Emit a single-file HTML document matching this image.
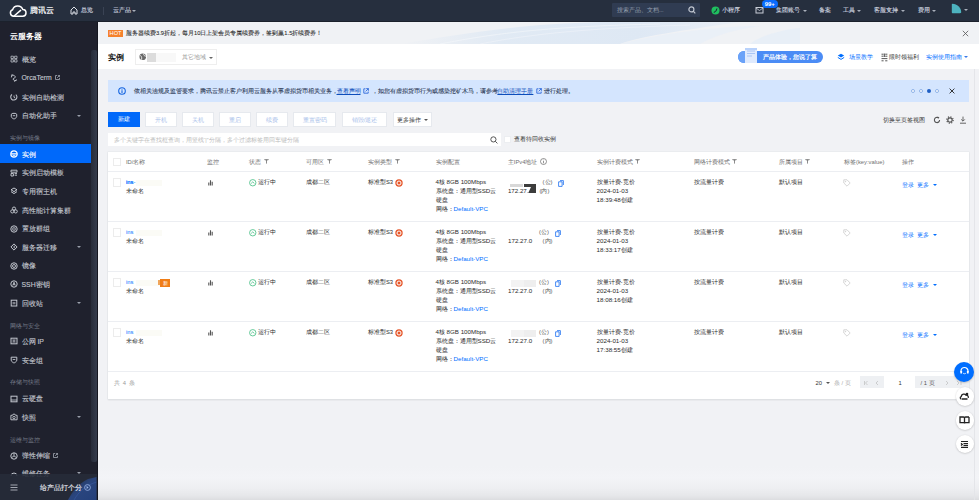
<!DOCTYPE html>
<html><head><meta charset="utf-8">
<style>
*{box-sizing:border-box;margin:0;padding:0}
html,body{width:979px;height:500px;overflow:hidden;background:#f1f2f5;font-family:"Liberation Sans",sans-serif;color:#333}
.a{position:absolute;white-space:nowrap}
.nav{color:#d3d8e0;font-size:6px;line-height:8px;-webkit-text-stroke:0.12px #d3d8e0}
.si{color:#cdd1d9;font-size:6.9px;line-height:10px;-webkit-text-stroke:0.12px currentColor}
.sh{color:#767c8a;font-size:5.5px;line-height:8px}
.hd{color:#888;font-size:5.8px;line-height:8px}
.cell{color:#333;font-size:5.8px;line-height:8.8px}
.lnk{color:#006eff}
.l{font-size:6.2px}
.btn{top:112.3px;height:14.5px;background:#fff;border:0.5px solid #e6e9ee;color:#a9c1ea;font-size:5.8px;line-height:14.5px;text-align:center}
.caret{width:0;height:0;border-left:2px solid transparent;border-right:2px solid transparent;border-top:2.4px solid #c9ced8}
</style></head><body>
<div class="a" style="left:98px;top:22px;width:881px;height:478px;background:#f1f2f5"></div>
<div class="a" style="left:98px;top:466px;width:881px;height:12px;background:linear-gradient(#f1f2f5,#f3f4f7)"></div><div class="a" style="left:98px;top:478px;width:881px;height:22px;background:linear-gradient(#f3f4f7 0%,#eeeff2 45%,#e6e7ea 80%,#dcdde0 100%)"></div>
<div class="a" style="left:974px;top:69px;width:1px;height:431px;background:#e4e5e9"></div>
<!-- notice bar -->
<div class="a" style="left:98px;top:22px;width:881px;height:22px;background:#f0f2f5"></div>
<svg class="a" style="left:400px;top:22px" width="400" height="22" viewBox="0 0 400 22"><defs><linearGradient id="wv" x1="0" x2="1" y1="0" y2="0"><stop offset="0" stop-color="#dfe8f3" stop-opacity="0"/><stop offset="0.3" stop-color="#dfe9f4" stop-opacity="0.9"/><stop offset="0.7" stop-color="#dce7f4" stop-opacity="0.9"/><stop offset="1" stop-color="#d6e4f6" stop-opacity="0.2"/></linearGradient></defs><path d="M0 22 C60 12 120 2 200 0 L340 0 C300 6 240 14 220 22 Z" fill="url(#wv)"/><path d="M220 22 C250 14 300 6 350 4 L360 4 C330 8 310 16 300 22 Z" fill="#e8eff8" opacity="0.8"/><path d="M350 22 C360 14 380 8 400 6 V22 Z" fill="#e3ecf8" opacity="0.6"/><path d="M40 22 C100 10 160 4 260 2" fill="none" stroke="#f4f7fb" stroke-width="0.8" opacity="0.8"/><path d="M80 22 C130 12 190 6 290 3" fill="none" stroke="#f4f7fb" stroke-width="0.6" opacity="0.8"/></svg>
<div class="a" style="left:108px;top:29.5px;width:15px;height:7.5px;background:#f5822c;color:#fff;font-size:5.6px;line-height:7.5px;text-align:center">HOT</div>
<div class="a" style="left:126px;top:29px;font-size:5.74px;line-height:8px;color:#2a2a2a;-webkit-text-stroke:0.08px #2a2a2a">服务器续费3.9折起，每月10日上架会员专属续费券，签到赢1.5折续费券！</div>
<svg class="a" style="left:962px;top:30px" width="7" height="7" viewBox="0 0 7 7"><path d="M0.8 0.8 L6.2 6.2 M6.2 0.8 L0.8 6.2" stroke="#555" stroke-width="0.8"/></svg>
<!-- header -->
<div class="a" style="left:98px;top:44px;width:881px;height:25px;background:#fff"></div>
<div class="a" style="left:108px;top:52.8px;font-size:7.6px;line-height:10px;color:#111;font-weight:bold">实例</div>
<div class="a" style="left:135px;top:49px;width:82px;height:16px;border:0.6px solid #eeeeee;background:#fff"></div>
<svg class="a" style="left:138.8px;top:53.3px" width="7.5" height="7.5" viewBox="0 0 7.5 7.5"><circle cx="3.75" cy="3.75" r="3.3" fill="#6a6a6a"/><path d="M1.2 2.5 C2.2 2.8 3 3.8 2.6 6.6 M4.6 0.8 C4.4 2.2 5.5 3.2 7 3.2" fill="none" stroke="#fff" stroke-width="0.8"/></svg>
<div class="a" style="left:147px;top:52.5px;width:9px;height:9.5px;background:#dcdcdc"></div>
<div class="a" style="left:156px;top:52.5px;width:20px;height:9.5px;background:#f8f8f8"></div>
<div class="a" style="left:181.5px;top:53px;font-size:5.8px;line-height:8px;color:#999">其它地域</div>
<div class="a caret" style="left:208.5px;top:56.5px;border-top-color:#666"></div>
<!-- header right -->
<div class="a" style="left:738px;top:50.5px;width:85px;height:12px;background:#4b8cf5;border-radius:6px"></div>
<div class="a" style="left:738px;top:50.5px;width:12px;height:12px;background:#6aa2f8;border-radius:6px 0 0 6px"></div>
<svg class="a" style="left:744px;top:47px" width="15" height="16" viewBox="0 0 15 16"><rect x="1" y="1" width="12" height="15" fill="#dfeafd"/><path d="M3 4 H11 M3 6.5 H11 M3 9 H8" stroke="#9cbcf2" stroke-width="0.8"/><rect x="1" y="1" width="12" height="2" fill="#b9d2fb"/></svg>
<div class="a" style="left:763px;top:52.5px;font-size:5.8px;line-height:8px;color:#fff;-webkit-text-stroke:0.2px #fff">产品体验，您说了算</div>
<svg class="a" style="left:837px;top:53px" width="8" height="8" viewBox="0 0 8 8"><path d="M4 0.8 L7.2 2.6 L4 4.4 L0.8 2.6 Z" fill="#006eff"/><path d="M0.8 4.4 L4 6.4 L7.2 4.4" fill="none" stroke="#006eff" stroke-width="1"/></svg>
<div class="a" style="left:849px;top:52.5px;font-size:5.8px;line-height:8px;color:#006eff">场景教学</div>
<svg class="a" style="left:880.5px;top:52.5px" width="7" height="9" viewBox="0 0 7 9"><path d="M0.5 1.2 H2.6 M0.5 3.2 H2.6 M4.2 1.2 H6.4 M4.2 3.2 H6.4 M0.5 5.6 H6.4 M0.5 7.8 H2.6 M4.2 7.8 H6.4 M3.4 0.5 V4" fill="none" stroke="#444" stroke-width="0.9"/></svg>
<div class="a" style="left:889px;top:52.5px;font-size:5.8px;line-height:8px;color:#333">限时领福利</div>
<div class="a" style="left:926px;top:52.5px;font-size:5.8px;line-height:8px;color:#006eff">实例使用指南</div>
<div class="a caret" style="left:964px;top:56px;border-top-color:#3b7ae8"></div>
<!-- info banner -->
<div class="a" style="left:108px;top:79.5px;width:861px;height:22.5px;background:#d4e5fe"></div>
<svg class="a" style="left:118px;top:86.5px" width="8" height="8" viewBox="0 0 8 8"><circle cx="4" cy="4" r="3.3" fill="none" stroke="#1565e0" stroke-width="1.1"/><path d="M4 3.3 V6" stroke="#1565e0" stroke-width="1.1"/><circle cx="4" cy="2.2" r="0.5" fill="#006eff"/></svg>
<div class="a" style="left:134.3px;top:86.5px;font-size:5.85px;line-height:8px;color:#2f3c58;-webkit-text-stroke:0.1px #2f3c58">依相关法规及监管要求，腾讯云禁止客户利用云服务从事虚拟货币相关业务，</div><div class="a" style="left:336.5px;top:86.5px;font-size:5.85px;line-height:8px;color:#0d4dbb;text-decoration:underline">查看声明</div><svg class="a" style="left:362.5px;top:87.5px" width="6" height="6" viewBox="0 0 6 6"><path d="M2.5 0.8 H0.8 V5.2 H5.2 V3.5 M3.2 0.6 H5.4 V2.8 M5.4 0.6 L2.6 3.4" fill="none" stroke="#1c5ad6" stroke-width="0.8"/></svg><div class="a" style="left:371.5px;top:86.5px;font-size:5.8px;line-height:8px;color:#2f3c58;-webkit-text-stroke:0.1px #2f3c58">，如您有虚拟货币行为或感染挖矿木马，请参考</div><div class="a" style="left:497.4px;top:86.5px;font-size:5.85px;line-height:8px;color:#0d4dbb;text-decoration:underline">自助清理手册</div><svg class="a" style="left:535.8px;top:87.5px" width="6" height="6" viewBox="0 0 6 6"><path d="M2.5 0.8 H0.8 V5.2 H5.2 V3.5 M3.2 0.6 H5.4 V2.8 M5.4 0.6 L2.6 3.4" fill="none" stroke="#1c5ad6" stroke-width="0.8"/></svg><div class="a" style="left:544.4px;top:86.5px;font-size:5.85px;line-height:8px;color:#2f3c58;-webkit-text-stroke:0.1px #2f3c58">进行处理。</div>
<div class="a" style="left:910.5px;top:88.5px;width:4px;height:4px;border-radius:2px;border:0.6px solid #8eb2e8;background:#fff"></div>
<div class="a" style="left:918.5px;top:88.5px;width:4px;height:4px;border-radius:2px;border:0.6px solid #8eb2e8;background:#fff"></div>
<div class="a" style="left:926.5px;top:88.5px;width:4px;height:4px;border-radius:2px;background:#1f5fc4"></div>
<div class="a" style="left:934.5px;top:88.5px;width:4px;height:4px;border-radius:2px;border:0.6px solid #8eb2e8;background:#fff"></div>
<svg class="a" style="left:949px;top:87.5px" width="6" height="6" viewBox="0 0 6 6"><path d="M0.6 0.6 L5.4 5.4 M5.4 0.6 L0.6 5.4" stroke="#222" stroke-width="0.9"/></svg>
<!-- buttons -->
<div class="a" style="left:108px;top:112.3px;width:32px;height:14.5px;background:#0069fa;color:#fff;font-size:5.8px;line-height:14.5px;text-align:center">新建</div>
<div class="a btn" style="left:145.3px;width:31.4px">开机</div>
<div class="a btn" style="left:182.3px;width:31.4px">关机</div>
<div class="a btn" style="left:219.4px;width:31.9px">重启</div>
<div class="a btn" style="left:256.4px;width:31.9px">续费</div>
<div class="a btn" style="left:293.4px;width:42.9px">重置密码</div>
<div class="a btn" style="left:342.3px;width:44.4px">销毁/退还</div>
<div class="a btn" style="left:393px;width:39px;color:#333">更多操作<span class="caret" style="display:inline-block;margin-left:3px;vertical-align:1px;border-top-color:#555"></span></div>
<div class="a" style="left:882.7px;top:116px;font-size:5.8px;line-height:8px;color:#333">切换至页签视图</div>
<svg class="a" style="left:933px;top:116px" width="8" height="8" viewBox="0 0 8 8"><path d="M6.6 4 A2.6 2.6 0 1 1 5.2 1.7" fill="none" stroke="#555" stroke-width="1.1"/><path d="M4.3 0.6 L6.3 1.2 L5.5 3.1 Z" fill="#555"/></svg>
<svg class="a" style="left:946px;top:116px" width="8" height="8" viewBox="0 0 8 8"><circle cx="4" cy="4" r="2.2" fill="none" stroke="#555" stroke-width="1.2"/><circle cx="4" cy="4" r="3.2" fill="none" stroke="#555" stroke-width="1.2" stroke-dasharray="1.2 1.31"/></svg>
<svg class="a" style="left:958.5px;top:116px" width="8" height="8" viewBox="0 0 8 8"><path d="M4 0.6 V5 M2.2 3.4 L4 5.2 L5.8 3.4 M1 7.2 H7" fill="none" stroke="#555" stroke-width="0.9"/></svg>
<!-- search -->
<div class="a" style="left:108px;top:132.6px;width:393px;height:13.4px;background:#fff"></div>
<div class="a" style="left:113.5px;top:135.5px;font-size:5.6px;line-height:8px;color:#bbb">多个关键字在查找框查询，用竖线“|”分隔，多个过滤标签用回车键分隔</div>
<svg class="a" style="left:489.5px;top:135.5px" width="8" height="8" viewBox="0 0 8 8"><circle cx="3.4" cy="3.4" r="2.6" fill="none" stroke="#444" stroke-width="0.9"/><path d="M5.3 5.3 L7.4 7.4" stroke="#444" stroke-width="0.9"/></svg>
<div class="a" style="left:503.7px;top:135.5px;width:7.7px;height:7.7px;background:#fff;border:0.5px solid #eceef1"></div>
<div class="a" style="left:514px;top:135.3px;font-size:5.8px;line-height:8px;color:#333">查看待回收实例</div>

<div class="a" style="left:108px;top:151.5px;width:861px;height:247.5px;background:#fff;box-shadow:0 0 0 0.5px #e3e5ea,0 1px 1.5px rgba(0,0,0,0.12)"></div>
<div class="a" style="left:112.8px;top:157.5px;width:8.5px;height:8.3px;border:0.6px solid #ececec;background:#fff"></div>
<div class="a" style="left:126px;top:157.5px;font-size:5.8px;line-height:8px;color:#707070">ID/名称</div>
<div class="a" style="left:206.7px;top:157.5px;font-size:5.8px;line-height:8px;color:#707070">监控</div>
<div class="a" style="left:248.6px;top:157.5px;font-size:5.8px;line-height:8px;color:#707070">状态</div>
<svg class="a" style="left:264.3px;top:159px" width="5" height="5" viewBox="0 0 5 5"><path d="M0.3 0.6 H4.7 M2.5 0.6 V4.6" stroke="#808080" stroke-width="0.9"/><path d="M1.2 1 L2.5 2.3 L3.8 1 Z" fill="#808080"/></svg>
<div class="a" style="left:305.6px;top:157.5px;font-size:5.8px;line-height:8px;color:#707070">可用区</div>
<svg class="a" style="left:326.8px;top:159px" width="5" height="5" viewBox="0 0 5 5"><path d="M0.3 0.6 H4.7 M2.5 0.6 V4.6" stroke="#808080" stroke-width="0.9"/><path d="M1.2 1 L2.5 2.3 L3.8 1 Z" fill="#808080"/></svg>
<div class="a" style="left:367.9px;top:157.5px;font-size:5.8px;line-height:8px;color:#707070">实例类型</div>
<svg class="a" style="left:394.5px;top:159px" width="5" height="5" viewBox="0 0 5 5"><path d="M0.3 0.6 H4.7 M2.5 0.6 V4.6" stroke="#808080" stroke-width="0.9"/><path d="M1.2 1 L2.5 2.3 L3.8 1 Z" fill="#808080"/></svg>
<div class="a" style="left:435.5px;top:157.5px;font-size:5.8px;line-height:8px;color:#707070">实例配置</div>
<div class="a" style="left:507.8px;top:157.5px;font-size:5.8px;line-height:8px;color:#707070">主IPv4地址</div>
<div class="a" style="left:596.6px;top:157.5px;font-size:5.8px;line-height:8px;color:#707070">实例计费模式</div>
<svg class="a" style="left:634.5px;top:159px" width="5" height="5" viewBox="0 0 5 5"><path d="M0.3 0.6 H4.7 M2.5 0.6 V4.6" stroke="#808080" stroke-width="0.9"/><path d="M1.2 1 L2.5 2.3 L3.8 1 Z" fill="#808080"/></svg>
<div class="a" style="left:693.6px;top:157.5px;font-size:5.8px;line-height:8px;color:#707070">网络计费模式</div>
<svg class="a" style="left:731.5px;top:159px" width="5" height="5" viewBox="0 0 5 5"><path d="M0.3 0.6 H4.7 M2.5 0.6 V4.6" stroke="#808080" stroke-width="0.9"/><path d="M1.2 1 L2.5 2.3 L3.8 1 Z" fill="#808080"/></svg>
<div class="a" style="left:779.2px;top:157.5px;font-size:5.8px;line-height:8px;color:#707070">所属项目</div>
<svg class="a" style="left:805.3px;top:159px" width="5" height="5" viewBox="0 0 5 5"><path d="M0.3 0.6 H4.7 M2.5 0.6 V4.6" stroke="#808080" stroke-width="0.9"/><path d="M1.2 1 L2.5 2.3 L3.8 1 Z" fill="#808080"/></svg>
<div class="a" style="left:844px;top:157.5px;font-size:5.8px;line-height:8px;color:#707070">标签(key:value)</div>
<div class="a" style="left:902px;top:157.5px;font-size:5.8px;line-height:8px;color:#707070">操作</div>
<svg class="a" style="left:540px;top:158px" width="7" height="7" viewBox="0 0 7 7"><circle cx="3.5" cy="3.5" r="3" fill="none" stroke="#666" stroke-width="0.7"/><path d="M3.5 3 V5.3" stroke="#666" stroke-width="0.7"/><circle cx="3.5" cy="1.9" r="0.45" fill="#666"/></svg>
<div class="a" style="left:108px;top:170.5px;width:861px;height:1px;background:#eceef2"></div>
<div class="a" style="left:112.5px;top:178.3px;width:8.5px;height:8.3px;border:0.6px solid #ececec;background:#fff"></div>
<div class="a" style="left:126px;top:178.3px;font-size:5.8px;line-height:8.8px;color:#2a2a2a"><span style="color:#006eff">ins</span></div>
<div class="a" style="left:126px;top:178.3px;font-size:5.8px;line-height:8.8px;color:#2a2a2a"><span style="color:#006eff">ins-</span></div>
<div class="a" style="left:136px;top:180px;width:26px;height:6px;background:#fbfbf6"></div>
<div class="a" style="left:126px;top:187.10000000000002px;font-size:5.8px;line-height:8.8px;color:#2a2a2a">未命名</div>
<svg class="a" style="left:207px;top:179px" width="7" height="7" viewBox="0 0 7 7"><path d="M1.8 6.5 V3.6 M3.5 6.5 V1.2 M5.2 6.5 V2.8" stroke="#555" stroke-width="1.1"/></svg>
<svg class="a" style="left:249px;top:179.3px" width="7.5" height="7.5" viewBox="0 0 7.5 7.5"><circle cx="3.75" cy="3.75" r="3.2" fill="none" stroke="#35b87a" stroke-width="0.75"/><path d="M2.1 4.5 L3.75 2.9 L5.4 4.5" fill="none" stroke="#35b87a" stroke-width="0.75"/></svg>
<div class="a" style="left:258.3px;top:178.3px;font-size:5.8px;line-height:8.8px;color:#2a2a2a">运行中</div>
<div class="a" style="left:305.6px;top:178.3px;font-size:5.8px;line-height:8.8px;color:#2a2a2a">成都二区</div>
<div class="a" style="left:367.9px;top:178.3px;font-size:5.8px;line-height:8.8px;color:#2a2a2a">标准型S3</div>
<svg class="a" style="left:394.5px;top:179px" width="8" height="8" viewBox="0 0 8 8"><circle cx="4" cy="4" r="3.7" fill="#e5562a"/><circle cx="4" cy="4" r="2" fill="none" stroke="#fff" stroke-width="1"/></svg>
<div class="a" style="left:435.5px;top:178.3px;font-size:5.8px;line-height:8.8px;color:#2a2a2a"><span class=l>4</span>核 <span class=l>8GB 100Mbps</span><br>系统盘：通用型<span class=l>SSD</span>云<br>硬盘<br>网络：<span class=l style="color:#006eff">Default-VPC</span></div>
<div class="a" style="left:510.4px;top:183.8px;width:13px;height:2.8px;background:#d8d8d8"></div>
<div class="a" style="left:507.9px;top:187.10000000000002px;font-size:5.8px;line-height:8.8px;color:#2a2a2a"><span class=l>172.27.</span></div>
<svg class="a" style="left:523.6px;top:183.8px" width="12" height="9.6" viewBox="0 0 12 9.6"><path d="M0 0 H12 V9.5 H4 L7 3 H0 Z" fill="#3c3c3c"/></svg>
<div class="a" style="left:542.6px;top:178.3px;font-size:5.8px;line-height:8.8px;color:#2a2a2a;color:#555">(公)</div>
<div class="a" style="left:539.5px;top:187.10000000000002px;font-size:5.8px;line-height:8.8px;color:#2a2a2a;color:#555">(内)</div>
<svg class="a" style="left:558px;top:179.8px" width="6" height="7" viewBox="0 0 6 7"><path d="M2 0.6 H5.4 V5 M0.6 1.8 H4.1 V6.4 H0.6 Z" fill="none" stroke="#1a6ff0" stroke-width="0.8"/></svg>
<div class="a" style="left:596.6px;top:178.3px;font-size:5.8px;line-height:8.8px;color:#2a2a2a">按量计费-竞价<br><span class=l>2024-01-03</span><br><span class=l>18:39:48</span>创建</div>
<div class="a" style="left:693.6px;top:178.3px;font-size:5.8px;line-height:8.8px;color:#2a2a2a">按流量计费</div>
<div class="a" style="left:779.2px;top:178.3px;font-size:5.8px;line-height:8.8px;color:#2a2a2a">默认项目</div>
<svg class="a" style="left:843px;top:179px" width="8" height="8" viewBox="0 0 8 8"><path d="M0.8 0.8 H4 L7.2 4 L4 7.2 L0.8 4 Z" fill="none" stroke="#ccc" stroke-width="0.8"/><circle cx="2.6" cy="2.6" r="0.6" fill="#ccc"/></svg>
<div class="a" style="left:902px;top:181px;font-size:5.8px;line-height:8.8px;color:#2a2a2a;color:#006eff">登录&nbsp; 更多</div>
<div class="a caret" style="left:932.5px;top:184.3px;border-top-color:#006eff"></div>
<div class="a" style="left:108px;top:220.5px;width:861px;height:1px;background:#eceef2"></div>
<div class="a" style="left:112.5px;top:228.3px;width:8.5px;height:8.3px;border:0.6px solid #ececec;background:#fff"></div>
<div class="a" style="left:126px;top:228.3px;font-size:5.8px;line-height:8.8px;color:#2a2a2a"><span style="color:#006eff">ins</span></div>
<div class="a" style="left:136px;top:230px;width:26px;height:6px;background:#fbfbf6"></div>
<div class="a" style="left:126px;top:237.10000000000002px;font-size:5.8px;line-height:8.8px;color:#2a2a2a">未命名</div>
<svg class="a" style="left:207px;top:229px" width="7" height="7" viewBox="0 0 7 7"><path d="M1.8 6.5 V3.6 M3.5 6.5 V1.2 M5.2 6.5 V2.8" stroke="#555" stroke-width="1.1"/></svg>
<svg class="a" style="left:249px;top:229.3px" width="7.5" height="7.5" viewBox="0 0 7.5 7.5"><circle cx="3.75" cy="3.75" r="3.2" fill="none" stroke="#35b87a" stroke-width="0.75"/><path d="M2.1 4.5 L3.75 2.9 L5.4 4.5" fill="none" stroke="#35b87a" stroke-width="0.75"/></svg>
<div class="a" style="left:258.3px;top:228.3px;font-size:5.8px;line-height:8.8px;color:#2a2a2a">运行中</div>
<div class="a" style="left:305.6px;top:228.3px;font-size:5.8px;line-height:8.8px;color:#2a2a2a">成都二区</div>
<div class="a" style="left:367.9px;top:228.3px;font-size:5.8px;line-height:8.8px;color:#2a2a2a">标准型S3</div>
<svg class="a" style="left:394.5px;top:229px" width="8" height="8" viewBox="0 0 8 8"><circle cx="4" cy="4" r="3.7" fill="#e5562a"/><circle cx="4" cy="4" r="2" fill="none" stroke="#fff" stroke-width="1"/></svg>
<div class="a" style="left:435.5px;top:228.3px;font-size:5.8px;line-height:8.8px;color:#2a2a2a"><span class=l>4</span>核 <span class=l>8GB 100Mbps</span><br>系统盘：通用型<span class=l>SSD</span>云<br>硬盘<br>网络：<span class=l style="color:#006eff">Default-VPC</span></div>
<div class="a" style="left:508px;top:237.10000000000002px;font-size:5.8px;line-height:8.8px;color:#2a2a2a"><span class=l>172.27.0</span></div>
<div class="a" style="left:539px;top:228.3px;font-size:5.8px;line-height:8.8px;color:#2a2a2a;color:#555">(公)</div>
<div class="a" style="left:542.6px;top:237.10000000000002px;font-size:5.8px;line-height:8.8px;color:#2a2a2a;color:#555">(内)</div>
<svg class="a" style="left:555px;top:229.8px" width="6" height="7" viewBox="0 0 6 7"><path d="M2 0.6 H5.4 V5 M0.6 1.8 H4.1 V6.4 H0.6 Z" fill="none" stroke="#1a6ff0" stroke-width="0.8"/></svg>
<div class="a" style="left:596.6px;top:228.3px;font-size:5.8px;line-height:8.8px;color:#2a2a2a">按量计费-竞价<br><span class=l>2024-01-03</span><br><span class=l>18:33:17</span>创建</div>
<div class="a" style="left:693.6px;top:228.3px;font-size:5.8px;line-height:8.8px;color:#2a2a2a">按流量计费</div>
<div class="a" style="left:779.2px;top:228.3px;font-size:5.8px;line-height:8.8px;color:#2a2a2a">默认项目</div>
<svg class="a" style="left:843px;top:229px" width="8" height="8" viewBox="0 0 8 8"><path d="M0.8 0.8 H4 L7.2 4 L4 7.2 L0.8 4 Z" fill="none" stroke="#ccc" stroke-width="0.8"/><circle cx="2.6" cy="2.6" r="0.6" fill="#ccc"/></svg>
<div class="a" style="left:902px;top:231px;font-size:5.8px;line-height:8.8px;color:#2a2a2a;color:#006eff">登录&nbsp; 更多</div>
<div class="a caret" style="left:932.5px;top:234.3px;border-top-color:#006eff"></div>
<div class="a" style="left:108px;top:270.5px;width:861px;height:1px;background:#eceef2"></div>
<div class="a" style="left:112.5px;top:278.3px;width:8.5px;height:8.3px;border:0.6px solid #ececec;background:#fff"></div>
<div class="a" style="left:126px;top:278.3px;font-size:5.8px;line-height:8.8px;color:#2a2a2a"><span style="color:#006eff">ins</span></div>
<div class="a" style="left:136px;top:280px;width:26px;height:6px;background:#fbfbf6"></div>
<div class="a" style="left:158px;top:280px;width:3px;height:5px;background:#f0a55a"></div>
<div class="a" style="left:160px;top:278.6px;width:10px;height:8.4px;background:#f07d16;color:#fff;font-size:5.2px;line-height:8.4px;text-align:center">新</div>
<div class="a" style="left:126px;top:287.1px;font-size:5.8px;line-height:8.8px;color:#2a2a2a">未命名</div>
<svg class="a" style="left:207px;top:279px" width="7" height="7" viewBox="0 0 7 7"><path d="M1.8 6.5 V3.6 M3.5 6.5 V1.2 M5.2 6.5 V2.8" stroke="#555" stroke-width="1.1"/></svg>
<svg class="a" style="left:249px;top:279.3px" width="7.5" height="7.5" viewBox="0 0 7.5 7.5"><circle cx="3.75" cy="3.75" r="3.2" fill="none" stroke="#35b87a" stroke-width="0.75"/><path d="M2.1 4.5 L3.75 2.9 L5.4 4.5" fill="none" stroke="#35b87a" stroke-width="0.75"/></svg>
<div class="a" style="left:258.3px;top:278.3px;font-size:5.8px;line-height:8.8px;color:#2a2a2a">运行中</div>
<div class="a" style="left:305.6px;top:278.3px;font-size:5.8px;line-height:8.8px;color:#2a2a2a">成都二区</div>
<div class="a" style="left:367.9px;top:278.3px;font-size:5.8px;line-height:8.8px;color:#2a2a2a">标准型S3</div>
<svg class="a" style="left:394.5px;top:279px" width="8" height="8" viewBox="0 0 8 8"><circle cx="4" cy="4" r="3.7" fill="#e5562a"/><circle cx="4" cy="4" r="2" fill="none" stroke="#fff" stroke-width="1"/></svg>
<div class="a" style="left:435.5px;top:278.3px;font-size:5.8px;line-height:8.8px;color:#2a2a2a"><span class=l>4</span>核 <span class=l>8GB 100Mbps</span><br>系统盘：通用型<span class=l>SSD</span>云<br>硬盘<br>网络：<span class=l style="color:#006eff">Default-VPC</span></div>
<div class="a" style="left:511px;top:280px;width:25px;height:6.5px;background:#f3f3f3"></div>
<div class="a" style="left:524px;top:280px;width:12px;height:6.5px;background:#eeeeee"></div>
<div class="a" style="left:508px;top:287.1px;font-size:5.8px;line-height:8.8px;color:#2a2a2a"><span class=l>172.27.0</span></div>
<div class="a" style="left:539px;top:278.3px;font-size:5.8px;line-height:8.8px;color:#2a2a2a;color:#555">(公)</div>
<div class="a" style="left:542.6px;top:287.1px;font-size:5.8px;line-height:8.8px;color:#2a2a2a;color:#555">(内)</div>
<svg class="a" style="left:555px;top:279.8px" width="6" height="7" viewBox="0 0 6 7"><path d="M2 0.6 H5.4 V5 M0.6 1.8 H4.1 V6.4 H0.6 Z" fill="none" stroke="#1a6ff0" stroke-width="0.8"/></svg>
<div class="a" style="left:596.6px;top:278.3px;font-size:5.8px;line-height:8.8px;color:#2a2a2a">按量计费-竞价<br><span class=l>2024-01-03</span><br><span class=l>18:08:16</span>创建</div>
<div class="a" style="left:693.6px;top:278.3px;font-size:5.8px;line-height:8.8px;color:#2a2a2a">按流量计费</div>
<div class="a" style="left:779.2px;top:278.3px;font-size:5.8px;line-height:8.8px;color:#2a2a2a">默认项目</div>
<svg class="a" style="left:843px;top:279px" width="8" height="8" viewBox="0 0 8 8"><path d="M0.8 0.8 H4 L7.2 4 L4 7.2 L0.8 4 Z" fill="none" stroke="#ccc" stroke-width="0.8"/><circle cx="2.6" cy="2.6" r="0.6" fill="#ccc"/></svg>
<div class="a" style="left:902px;top:281px;font-size:5.8px;line-height:8.8px;color:#2a2a2a;color:#006eff">登录&nbsp; 更多</div>
<div class="a caret" style="left:932.5px;top:284.3px;border-top-color:#006eff"></div>
<div class="a" style="left:108px;top:320.5px;width:861px;height:1px;background:#eceef2"></div>
<div class="a" style="left:112.5px;top:328.3px;width:8.5px;height:8.3px;border:0.6px solid #ececec;background:#fff"></div>
<div class="a" style="left:126px;top:328.3px;font-size:5.8px;line-height:8.8px;color:#2a2a2a"><span style="color:#006eff">ins</span></div>
<div class="a" style="left:136px;top:330px;width:26px;height:6px;background:#fbfbf6"></div>
<div class="a" style="left:126px;top:337.1px;font-size:5.8px;line-height:8.8px;color:#2a2a2a">未命名</div>
<svg class="a" style="left:207px;top:329px" width="7" height="7" viewBox="0 0 7 7"><path d="M1.8 6.5 V3.6 M3.5 6.5 V1.2 M5.2 6.5 V2.8" stroke="#555" stroke-width="1.1"/></svg>
<svg class="a" style="left:249px;top:329.3px" width="7.5" height="7.5" viewBox="0 0 7.5 7.5"><circle cx="3.75" cy="3.75" r="3.2" fill="none" stroke="#35b87a" stroke-width="0.75"/><path d="M2.1 4.5 L3.75 2.9 L5.4 4.5" fill="none" stroke="#35b87a" stroke-width="0.75"/></svg>
<div class="a" style="left:258.3px;top:328.3px;font-size:5.8px;line-height:8.8px;color:#2a2a2a">运行中</div>
<div class="a" style="left:305.6px;top:328.3px;font-size:5.8px;line-height:8.8px;color:#2a2a2a">成都二区</div>
<div class="a" style="left:367.9px;top:328.3px;font-size:5.8px;line-height:8.8px;color:#2a2a2a">标准型S3</div>
<svg class="a" style="left:394.5px;top:329px" width="8" height="8" viewBox="0 0 8 8"><circle cx="4" cy="4" r="3.7" fill="#e5562a"/><circle cx="4" cy="4" r="2" fill="none" stroke="#fff" stroke-width="1"/></svg>
<div class="a" style="left:435.5px;top:328.3px;font-size:5.8px;line-height:8.8px;color:#2a2a2a"><span class=l>4</span>核 <span class=l>8GB 100Mbps</span><br>系统盘：通用型<span class=l>SSD</span>云<br>硬盘<br>网络：<span class=l style="color:#006eff">Default-VPC</span></div>
<div class="a" style="left:511px;top:330px;width:25px;height:6.5px;background:#f3f3f3"></div>
<div class="a" style="left:524px;top:330px;width:12px;height:6.5px;background:#eeeeee"></div>
<div class="a" style="left:508px;top:337.1px;font-size:5.8px;line-height:8.8px;color:#2a2a2a"><span class=l>172.27.0</span></div>
<div class="a" style="left:539px;top:328.3px;font-size:5.8px;line-height:8.8px;color:#2a2a2a;color:#555">(公)</div>
<div class="a" style="left:542.6px;top:337.1px;font-size:5.8px;line-height:8.8px;color:#2a2a2a;color:#555">(内)</div>
<svg class="a" style="left:555px;top:329.8px" width="6" height="7" viewBox="0 0 6 7"><path d="M2 0.6 H5.4 V5 M0.6 1.8 H4.1 V6.4 H0.6 Z" fill="none" stroke="#1a6ff0" stroke-width="0.8"/></svg>
<div class="a" style="left:596.6px;top:328.3px;font-size:5.8px;line-height:8.8px;color:#2a2a2a">按量计费-竞价<br><span class=l>2024-01-03</span><br><span class=l>17:38:55</span>创建</div>
<div class="a" style="left:693.6px;top:328.3px;font-size:5.8px;line-height:8.8px;color:#2a2a2a">按流量计费</div>
<div class="a" style="left:779.2px;top:328.3px;font-size:5.8px;line-height:8.8px;color:#2a2a2a">默认项目</div>
<svg class="a" style="left:843px;top:329px" width="8" height="8" viewBox="0 0 8 8"><path d="M0.8 0.8 H4 L7.2 4 L4 7.2 L0.8 4 Z" fill="none" stroke="#ccc" stroke-width="0.8"/><circle cx="2.6" cy="2.6" r="0.6" fill="#ccc"/></svg>
<div class="a" style="left:902px;top:331px;font-size:5.8px;line-height:8.8px;color:#2a2a2a;color:#006eff">登录&nbsp; 更多</div>
<div class="a caret" style="left:932.5px;top:334.3px;border-top-color:#006eff"></div>
<div class="a" style="left:108px;top:370.5px;width:861px;height:1px;background:#eceef2"></div>
<div class="a" style="left:113.5px;top:378.5px;font-size:5.8px;line-height:8px;color:#999">共&nbsp; 4&nbsp; 条</div>
<div class="a" style="left:815.5px;top:378.5px;font-size:5.8px;line-height:8px;color:#333">20</div>
<div class="a caret" style="left:825.5px;top:381.7px;border-top-color:#555"></div>
<div class="a" style="left:834px;top:378.5px;font-size:5.8px;line-height:8px;color:#aaa">条 / 页</div>
<div class="a" style="left:860.3px;top:376.3px;width:108.7px;height:12.2px;background:#eef0f3"></div>
<div class="a" style="left:883.7px;top:376.3px;width:31.3px;height:12.2px;background:#fff"></div>
<div class="a" style="left:898.5px;top:378.5px;font-size:5.8px;line-height:8px;color:#333">1</div>
<div class="a" style="left:920.5px;top:378.5px;font-size:5.8px;line-height:8px;color:#555">/ 1 页</div>
<svg class="a" style="left:863px;top:379.5px" width="20" height="6" viewBox="0 0 20 6"><path d="M1.5 1 V5 M4.5 1 L2.5 3 L4.5 5 M15 1 L13 3 L15 5" fill="none" stroke="#bbb" stroke-width="0.7"/></svg>
<svg class="a" style="left:943px;top:379.5px" width="20" height="6" viewBox="0 0 20 6"><path d="M3 1 L5 3 L3 5 M14 1 L16 3 L14 5 M18 1 V5" fill="none" stroke="#bbb" stroke-width="0.7"/></svg>
<div class="a" style="left:954.3px;top:362px;width:19.5px;height:19.5px;border-radius:10px;background:#006eff;box-shadow:0 1px 2px rgba(0,0,0,0.2)"></div>
<svg class="a" style="left:958.5px;top:366px" width="11" height="11" viewBox="0 0 11 11"><path d="M2 6 V5 A3.5 3.5 0 0 1 9 5 V6" fill="none" stroke="#fff" stroke-width="1.2"/><rect x="1.3" y="5" width="1.8" height="2.6" rx="0.5" fill="#fff"/><rect x="7.9" y="5" width="1.8" height="2.6" rx="0.5" fill="#fff"/><path d="M4 7 C4.8 8 6.2 8 7 7" fill="none" stroke="#fff" stroke-width="0.8"/></svg>
<div class="a" style="left:955.5px;top:387.40000000000003px;width:18.4px;height:18.4px;border-radius:9.2px;background:#fff;box-shadow:0 0.5px 2px rgba(0,0,0,0.22)"></div>
<svg class="a" style="left:959px;top:391.1px" width="11" height="11" viewBox="0 0 11 11"><path d="M2.5 8 C1 8 0.8 6 2.2 5.6 C2.4 3 5.8 2.2 7 4.2 C8.6 4 9.6 5.3 9.3 6.8 M3 8 H8.5" fill="none" stroke="#222" stroke-width="1.3"/><circle cx="8" cy="3" r="1.3" fill="#222"/></svg>
<div class="a" style="left:955.5px;top:411.40000000000003px;width:18.4px;height:18.4px;border-radius:9.2px;background:#fff;box-shadow:0 0.5px 2px rgba(0,0,0,0.22)"></div>
<svg class="a" style="left:959px;top:415.1px" width="11" height="11" viewBox="0 0 11 11"><path d="M1 2 H4.5 C5 2 5.5 2.3 5.5 3 V8.5 C5.5 8 5 7.6 4.5 7.6 H1 Z M10 2 H6.5 C6 2 5.5 2.3 5.5 3 M10 2 V7.6 H6.5 C6 7.6 5.5 8 5.5 8.5" fill="none" stroke="#222" stroke-width="1.3"/></svg>
<div class="a" style="left:955.5px;top:435.1px;width:18.4px;height:18.4px;border-radius:9.2px;background:#fff;box-shadow:0 0.5px 2px rgba(0,0,0,0.22)"></div>
<svg class="a" style="left:959px;top:438.8px" width="11" height="11" viewBox="0 0 11 11"><path d="M2 2.5 H9 M4.5 4.5 H9 M4.5 6.3 H9 M2 8.3 H9 M2 4.3 L3.3 5.4 L2 6.5" fill="none" stroke="#222" stroke-width="1.2"/></svg>
<div class="a" style="left:0;top:22px;width:98px;height:478px;background:#1f212d"></div>
<div class="a" style="left:96.5px;top:22px;width:1.5px;height:478px;background:#14161f"></div>
<div class="a" style="left:10px;top:31.8px;font-size:7.8px;line-height:10px;color:#fff;font-weight:bold">云服务器</div>
<svg class="a" style="left:9.5px;top:55.4px" width="8" height="8" viewBox="0 0 8 8"><path d="M1 1.2h2.4v2.3H1zM4.6 1.2h2.4v2.3H4.6zM1 4.7h2.4v2.3H1zM4.6 4.7h2.4v2.3H4.6z" fill="none" stroke="#c3c7cf" stroke-width="0.75"/></svg>
<div class="a si" style="left:21.5px;top:55.0px;color:#c3c7cf">概览</div>
<svg class="a" style="left:9.5px;top:73.6px" width="8" height="8" viewBox="0 0 8 8"><path d="M2 1 C4 1 5.5 2 5.2 3.3 C5 4.3 3 4 3.2 5.2 C3.4 6.4 5.5 7 6.3 6.2 M2 1 L1.5 3 M6.3 6.2 L4.5 7.2" fill="none" stroke="#c3c7cf" stroke-width="1" stroke-linecap="round"/></svg>
<div class="a si" style="left:21.5px;top:73.2px;color:#c3c7cf">OrcaTerm<svg width="5" height="5" viewBox="0 0 5 5" style="margin-left:3px;vertical-align:0px"><path d="M2 0.5 H0.5 V4.5 H4.5 V3 M2.8 0.4 H4.6 V2.2 M4.6 0.4 L2.2 2.8" fill="none" stroke="#a3a9b4" stroke-width="0.8"/></svg></div>
<svg class="a" style="left:9.5px;top:93px" width="8" height="8" viewBox="0 0 8 8"><path d="M5.8 1.6 A3.1 3.1 0 1 1 2 1.5" fill="none" stroke="#c3c7cf" stroke-width="1.05"/><path d="M4 2.5 V4.3 L5.2 5" fill="none" stroke="#c3c7cf" stroke-width="0.9"/></svg>
<div class="a si" style="left:21.5px;top:92.6px;color:#c3c7cf">实例自助检测</div>
<svg class="a" style="left:9.5px;top:111.6px" width="8" height="8" viewBox="0 0 8 8"><path d="M1.3 2.2 C1.3 1 6.7 1 6.7 2.2 V4.5 C6.7 6 4 7 4 7 C4 7 1.3 6 1.3 4.5 Z" fill="none" stroke="#c3c7cf" stroke-width="1"/><path d="M2.8 3.7 H5.2" stroke="#c3c7cf" stroke-width="0.9"/></svg>
<div class="a si" style="left:21.5px;top:111.2px;color:#c3c7cf">自动化助手</div>
<div class="a caret" style="left:77px;top:114.6px;border-top-color:#9aa0ab"></div>
<div class="a sh" style="left:10px;top:134.0px">实例与镜像</div>
<div class="a" style="left:0;top:144px;width:91px;height:19px;background:#0069fa"></div>
<svg class="a" style="left:9.5px;top:150px" width="8" height="8" viewBox="0 0 8 8"><circle cx="4" cy="4" r="3.2" fill="none" stroke="#fff" stroke-width="1.2"/><path d="M0.9 3.9 H7.1 M2.7 5.8 H5.3" stroke="#fff" stroke-width="1.1"/></svg>
<div class="a si" style="left:21.5px;top:149.6px;color:#fff">实例</div>
<svg class="a" style="left:9.5px;top:168.6px" width="8" height="8" viewBox="0 0 8 8"><path d="M1 1.2 H7 V3.2 H1 Z M1 4.5 H3.4 V7 H1 Z M4.6 4.6 H7 M4.6 6.2 H7" fill="none" stroke="#c3c7cf" stroke-width="0.95"/></svg>
<div class="a si" style="left:21.5px;top:168.2px;color:#c3c7cf">实例启动模板</div>
<svg class="a" style="left:9.5px;top:187px" width="8" height="8" viewBox="0 0 8 8"><path d="M4 1 L7 2.8 L4 4.6 L1 2.8 Z M1 4.6 L4 6.6 L7 4.6" fill="none" stroke="#c3c7cf" stroke-width="1" stroke-linejoin="round"/></svg>
<div class="a si" style="left:21.5px;top:186.6px;color:#c3c7cf">专用宿主机</div>
<svg class="a" style="left:9.5px;top:206px" width="8" height="8" viewBox="0 0 8 8"><circle cx="4" cy="2.6" r="1.6" fill="none" stroke="#c3c7cf" stroke-width="0.95"/><circle cx="2.3" cy="5.4" r="1.6" fill="none" stroke="#c3c7cf" stroke-width="0.95"/><circle cx="5.7" cy="5.4" r="1.6" fill="none" stroke="#c3c7cf" stroke-width="0.95"/></svg>
<div class="a si" style="left:21.5px;top:205.6px;color:#c3c7cf">高性能计算集群</div>
<svg class="a" style="left:9.5px;top:224.6px" width="8" height="8" viewBox="0 0 8 8"><circle cx="4" cy="4" r="3.2" fill="none" stroke="#c3c7cf" stroke-width="1"/><path d="M2.8 2.8 H5.2 V5.2 H2.8 Z" fill="none" stroke="#c3c7cf" stroke-width="0.8"/></svg>
<div class="a si" style="left:21.5px;top:224.2px;color:#c3c7cf">置放群组</div>
<svg class="a" style="left:9.5px;top:243px" width="8" height="8" viewBox="0 0 8 8"><path d="M4 0.9 L7.1 4 L4 7.1 L0.9 4 Z" fill="none" stroke="#c3c7cf" stroke-width="1"/><path d="M5 2.8 L3.6 4 L5 5.2" fill="none" stroke="#c3c7cf" stroke-width="0.9"/></svg>
<div class="a si" style="left:21.5px;top:242.6px;color:#c3c7cf">服务器迁移</div>
<div class="a caret" style="left:77px;top:246.0px;border-top-color:#9aa0ab"></div>
<svg class="a" style="left:9.5px;top:261.6px" width="8" height="8" viewBox="0 0 8 8"><circle cx="4" cy="4" r="3.2" fill="none" stroke="#c3c7cf" stroke-width="1"/><circle cx="4" cy="4" r="1.5" fill="none" stroke="#c3c7cf" stroke-width="0.9"/></svg>
<div class="a si" style="left:21.5px;top:261.2px;color:#c3c7cf">镜像</div>
<svg class="a" style="left:9.5px;top:280.4px" width="8" height="8" viewBox="0 0 8 8"><circle cx="4" cy="4" r="3.2" fill="none" stroke="#c3c7cf" stroke-width="1"/><path d="M2.7 5.6 L4 2.2 L5.3 5.6 M3.1 4.6 H4.9" fill="none" stroke="#c3c7cf" stroke-width="0.85"/></svg>
<div class="a si" style="left:21.5px;top:280.0px;color:#c3c7cf">SSH密钥</div>
<svg class="a" style="left:9.5px;top:299px" width="8" height="8" viewBox="0 0 8 8"><rect x="1.2" y="1.2" width="5.6" height="5.8" fill="none" stroke="#c3c7cf" stroke-width="1"/><path d="M3.2 3 V5.3 M4.8 3 V5.3" stroke="#c3c7cf" stroke-width="0.85"/></svg>
<div class="a si" style="left:21.5px;top:298.6px;color:#c3c7cf">回收站</div>
<div class="a caret" style="left:77px;top:302.0px;border-top-color:#9aa0ab"></div>
<div class="a sh" style="left:10px;top:321.6px">网络与安全</div>
<svg class="a" style="left:9.5px;top:337px" width="8" height="8" viewBox="0 0 8 8"><rect x="1" y="1.2" width="6" height="5.6" fill="none" stroke="#c3c7cf" stroke-width="1"/><path d="M2.4 3 H5.6 M2.4 5 H5.6 M4 3 V5" stroke="#c3c7cf" stroke-width="0.8"/></svg>
<div class="a si" style="left:21.5px;top:336.6px;color:#c3c7cf">公网 IP</div>
<svg class="a" style="left:9.5px;top:356px" width="8" height="8" viewBox="0 0 8 8"><path d="M1.2 1.2 H6.8 V4.2 C6.8 5.8 4 7 4 7 C4 7 1.2 5.8 1.2 4.2 Z" fill="none" stroke="#c3c7cf" stroke-width="1"/><path d="M2.7 3.5 H5.3" stroke="#c3c7cf" stroke-width="0.85"/></svg>
<div class="a si" style="left:21.5px;top:355.6px;color:#c3c7cf">安全组</div>
<div class="a sh" style="left:10px;top:378.4px">存储与快照</div>
<svg class="a" style="left:9.5px;top:394.6px" width="8" height="8" viewBox="0 0 8 8"><rect x="1" y="1.2" width="6" height="5.6" fill="none" stroke="#c3c7cf" stroke-width="1"/><path d="M1 5 H7" stroke="#c3c7cf" stroke-width="0.85"/></svg>
<div class="a si" style="left:21.5px;top:394.2px;color:#c3c7cf">云硬盘</div>
<svg class="a" style="left:9.5px;top:413px" width="8" height="8" viewBox="0 0 8 8"><path d="M0.9 2.3 H2.5 L3.1 1.2 H4.9 L5.5 2.3 H7.1 V6.8 H0.9 Z" fill="none" stroke="#c3c7cf" stroke-width="0.95"/><circle cx="4" cy="4.5" r="1.2" fill="none" stroke="#c3c7cf" stroke-width="0.85"/></svg>
<div class="a si" style="left:21.5px;top:412.6px;color:#c3c7cf">快照</div>
<div class="a caret" style="left:77px;top:416.0px;border-top-color:#9aa0ab"></div>
<div class="a sh" style="left:10px;top:435.6px">运维与监控</div>
<svg class="a" style="left:9.5px;top:451.6px" width="8" height="8" viewBox="0 0 8 8"><circle cx="4" cy="4" r="3.2" fill="none" stroke="#c3c7cf" stroke-width="1"/><path d="M4 1 V4 L1.5 5.6 M4 4 L6.5 5.6" fill="none" stroke="#c3c7cf" stroke-width="0.85"/></svg>
<div class="a si" style="left:21.5px;top:451.2px;color:#c3c7cf">弹性伸缩<svg width="5" height="5" viewBox="0 0 5 5" style="margin-left:3px;vertical-align:0px"><path d="M2 0.5 H0.5 V4.5 H4.5 V3 M2.8 0.4 H4.6 V2.2 M4.6 0.4 L2.2 2.8" fill="none" stroke="#a3a9b4" stroke-width="0.8"/></svg></div>
<svg class="a" style="left:9.5px;top:469.3px" width="8" height="8" viewBox="0 0 8 8"><path d="M1 7 A3 3 0 0 1 7 7" fill="none" stroke="#c3c7cf" stroke-width="1"/></svg>
<div class="a si" style="left:21.5px;top:468.9px;color:#c3c7cf">维修任务</div>
<div class="a caret" style="left:77px;top:472.3px;border-top-color:#9aa0ab"></div>
<div class="a" style="left:91px;top:50px;width:5.5px;height:412px;background:linear-gradient(90deg,#272c39,#343b4b);border-radius:2px"></div>
<div class="a" style="left:0;top:474px;width:96.5px;height:26px;background:rgba(38,43,56,0.9)"></div>
<svg class="a" style="left:60px;top:473px" width="37" height="27" viewBox="0 0 37 27"><defs><linearGradient id="bg1" x1="0" y1="0" x2="1" y2="1"><stop offset="0" stop-color="#2a4a8e" stop-opacity="0.15"/><stop offset="0.5" stop-color="#2d57ad" stop-opacity="0.6"/><stop offset="1" stop-color="#23468f" stop-opacity="0.75"/></linearGradient></defs><path d="M8 27 C12 19 18 11 28 6 L36.5 4 V27 Z" fill="url(#bg1)"/><path d="M14 27 C18 20 24 13 36.5 9" fill="none" stroke="#4a72c8" stroke-width="0.6" opacity="0.5"/></svg>
<svg class="a" style="left:10px;top:484px" width="8" height="7" viewBox="0 0 8 7"><path d="M0.5 1 H7.5 M0.5 3.5 H7.5 M0.5 6 H7.5" stroke="#c3c7cf" stroke-width="0.8"/></svg>
<div class="a si" style="left:40px;top:482.5px;font-size:6.8px;color:#e5e8ee">给产品打个分</div>
<svg class="a" style="left:84px;top:484px" width="7" height="7" viewBox="0 0 7 7"><circle cx="3.5" cy="3.5" r="2.9" fill="none" stroke="#9fb8e8" stroke-width="0.8"/><path d="M2.6 2 L4.6 3.5 L2.6 5 Z" fill="#9fb8e8"/></svg>
<div class="a" style="left:0;top:0;width:979px;height:22px;background:#262f3e;border-bottom:1px solid #1b212c"></div>
<svg class="a" style="left:9px;top:3.5px" width="18" height="14" viewBox="0 0 18 14"><path d="M4.6 12.2 A3.3 3.3 0 0 1 3.6 5.8 A5.4 5.4 0 0 1 13.8 5.6 A3.3 3.3 0 0 1 13.6 12.2 Z" fill="none" stroke="#fff" stroke-width="1.5" stroke-linejoin="round"/><path d="M4.8 12.2 L11.6 6.4" fill="none" stroke="#fff" stroke-width="1.5" stroke-linecap="round"/></svg>
<div class="a" style="left:30px;top:4.8px;font-size:8.3px;line-height:11px;color:#f2f3f5;-webkit-text-stroke:0.25px #f2f3f5">腾讯云</div>
<svg class="a" style="left:70px;top:6px" width="8" height="9" viewBox="0 0 8 9"><path d="M1 8 V4 L4 1 L7 4 V8 H5 V6 H3 V8 Z" fill="none" stroke="#dde1e8" stroke-width="1" stroke-linejoin="round"/></svg>
<div class="a nav" style="left:81px;top:6px">总览</div>
<div class="a" style="left:103px;top:7px;width:1px;height:8px;background:#3a4354"></div>
<div class="a nav" style="left:113px;top:6px">云产品</div>
<div class="a caret" style="border-top-color:#a9b0bb;left:132px;top:9.5px"></div>
<div class="a" style="left:612px;top:2.8px;width:88px;height:14.6px;background:#303c52;border-radius:1px"></div>
<div class="a" style="left:617px;top:6px;font-size:5.6px;line-height:8px;color:#9aa3b3">搜索产品、文档...</div>
<svg class="a" style="left:688px;top:6px" width="8" height="8" viewBox="0 0 8 8"><circle cx="3.4" cy="3.4" r="2.5" fill="none" stroke="#c0c6d0" stroke-width="1.2"/><path d="M5.2 5.2 L7.3 7.3" stroke="#c0c6d0" stroke-width="1.2"/></svg>
<svg class="a" style="left:711px;top:5.5px" width="9" height="9" viewBox="0 0 9 9"><circle cx="4.5" cy="4.5" r="4" fill="#1fbf5f"/><path d="M2.8 6.4 C4.8 5.6 5.8 4.2 6 2.5" fill="none" stroke="#1c2534" stroke-width="1.1"/></svg>
<div class="a nav" style="left:722px;top:6px">小程序</div>
<svg class="a" style="left:755px;top:6px" width="9" height="8" viewBox="0 0 9 8"><rect x="1" y="1.5" width="7" height="5.5" fill="none" stroke="#c9ced8" stroke-width="1"/><path d="M1 2 L4.5 4.5 L8 2" fill="none" stroke="#c9ced8" stroke-width="0.8"/></svg>
<div class="a" style="left:762px;top:-0.5px;width:15.5px;height:8.5px;background:#0a6cff;border-radius:4.25px;color:#fff;font-size:6px;line-height:8.5px;text-align:center;font-weight:bold">99+</div>
<div class="a nav" style="left:776px;top:6px">集团账号</div>
<div class="a caret" style="border-top-color:#a9b0bb;left:803px;top:9.5px"></div>
<div class="a nav" style="left:819px;top:6px">备案</div>
<div class="a nav" style="left:843px;top:6px">工具</div>
<div class="a caret" style="border-top-color:#a9b0bb;left:857px;top:9.5px"></div>
<div class="a nav" style="left:874px;top:6px">客服支持</div>
<div class="a caret" style="border-top-color:#a9b0bb;left:901px;top:9.5px"></div>
<div class="a nav" style="left:918px;top:6px">费用</div>
<div class="a caret" style="border-top-color:#a9b0bb;left:932px;top:9.5px"></div>
<svg class="a" style="left:951px;top:2.5px" width="11" height="11" viewBox="0 0 11 11"><path d="M1.5 0.8 C6 0.8 10 4.5 10.2 9 C10.2 9.8 9.8 10.2 9 10.2 L1.5 10.2 C1 10.2 0.8 9.8 0.8 9.2 L0.8 1.5 C0.8 1 1 0.8 1.5 0.8 Z" fill="#4db3bf"/></svg>
<div class="a caret" style="border-top-color:#a9b0bb;left:964px;top:9px"></div>

</body></html>
